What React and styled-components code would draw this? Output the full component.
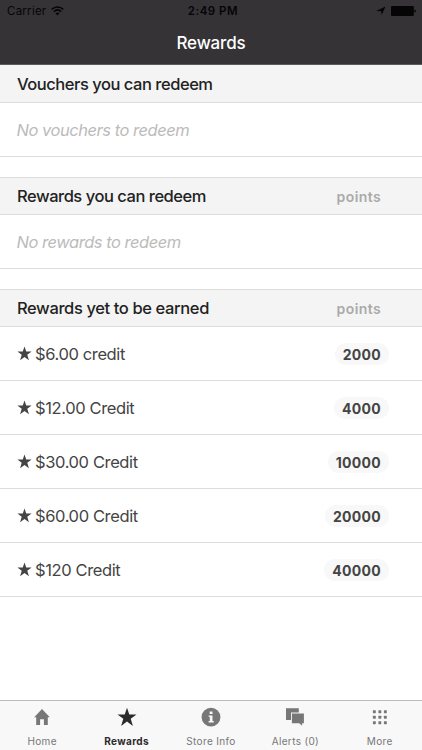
import React from "react"
import styled, { createGlobalStyle } from "styled-components"

const GlobalStyle = createGlobalStyle`
  * {
    box-sizing: border-box;
  }

  body {
    margin: 0;
    background: #fff;
    color: #444;
    font-family: Inter, "Liberation Sans", sans-serif;
    font-size: 16.5px;
  }
`;

const Screen = styled.div`
  display: flex;
  flex-direction: column;
  height: 750px;
  width: 422px;
  overflow: hidden;
`;

const TopBar = styled.header`
  height: 65px;
  flex: none;
  background: #353336;
  border-bottom: 1px solid #5c5b5e;
`;

const StatusBar = styled.div`
  display: grid;
  grid-template-columns: 1fr auto 1fr;
  align-items: center;
  height: 22px;
  padding: 0 6px 0 7px;
  color: #050505;
  font-size: 11.5px;
  line-height: 22px;
`;

const StatusGroup = styled.div`
  display: flex;
  align-items: center;
  justify-content: ${props => props.$end ? "flex-end" : "flex-start"};
  gap: 5px;
  letter-spacing: 0.25px;
`;

const Clock = styled.span`
  padding-left: 3px;
  font-weight: 600;
  letter-spacing: 0.5px;
`;

const Title = styled.h1`
  margin: 0;
  color: #fff;
  font-size: 17px;
  font-weight: 500;
  line-height: 42px;
  letter-spacing: -0.15px;
  text-align: center;
`;

const Content = styled.main`
  flex: 1;
`;

const Section = styled.section`
  margin-bottom: 20px;
`;

const SectionHeader = styled.div`
  display: flex;
  align-items: center;
  justify-content: space-between;
  height: 38px;
  padding: 0 41px 0 17px;
  background: #f4f4f4;
  border-top: 1px solid ${props => props.$first ? "#f4f4f8" : "#dedede"};
  border-bottom: 1px solid #dcdcdc;
`;

const SectionTitle = styled.h2`
  margin: 0;
  color: #222;
  font-size: 16.5px;
  font-weight: 450;
  letter-spacing: ${props => props.$spacing || "-0.47px"};
`;

const PointsLabel = styled.span`
  color: #aaa;
  font-size: 14px;
  font-weight: 600;
  letter-spacing: 0.4px;
`;

const Row = styled.div`
  display: flex;
  align-items: center;
  height: 54px;
  padding: 0 33px 0 16.5px;
  border-bottom: 1px solid #dcdcdc;
`;

const EmptyText = styled.span`
  color: #bbb;
  font-style: italic;
  letter-spacing: -0.47px;
`;

const RewardName = styled.span`
  flex: 1;
  margin-left: 3.5px;
  letter-spacing: -0.38px;
`;

const Pill = styled.span`
  height: 22px;
  padding: 0 8px 0 8px;
  border-radius: 11px;
  background: #f8f8f8;
  font-size: 14px;
  font-weight: 650;
  line-height: 23px;
  letter-spacing: 0.3px;
`;

const TabBar = styled.nav`
  display: grid;
  grid-template-columns: repeat(5, 1fr);
  flex: none;
  height: 50px;
  background: #f8f8f8;
  border-top: 1px solid #bcbcbc;
`;

const Tab = styled.div`
  display: flex;
  flex-direction: column;
  align-items: center;
  padding-top: 6px;
  color: ${props => props.$active ? "#2b2b2b" : "#777"};
  font-size: 10px;
  font-weight: ${props => props.$active ? 700 : 400};
  line-height: 14px;
  letter-spacing: 0.35px;

  svg {
    margin-bottom: 7px;
  }
`;

function WifiIcon() {
  return (
    <svg width="13" height="10" viewBox="0 0 13 10" fill="none" stroke="currentColor" strokeWidth="1.5">
      <path d="M0.7 3.4C4 .2 9 .2 12.3 3.4M2.8 5.7C5 3.5 8 3.5 10.2 5.7" />
      <path d="M4.4 7.3Q6.5 5.5 8.6 7.3L6.5 9.5Z" fill="currentColor" stroke="none" />
    </svg>
  )
}

function LocationIcon() {
  return (
    <svg width="10" height="10" viewBox="0 0 9 9" fill="currentColor">
      <path d="M8.5 0.5L5.2 8.2L4.6 4.7L0.2 4.5Z" />
    </svg>
  )
}

function BatteryIcon() {
  return (
    <svg width="25" height="10" viewBox="0 0 25 10" fill="currentColor">
      <rect width="22.8" height="10" rx="1" />
      <path d="M23.4 3.4Q25 3.8 25 5T23.4 6.6Z" />
    </svg>
  )
}

function StarIcon({ size }) {
  return (
    <svg width={size} height={size} viewBox="0 0 20 20" fill="currentColor">
      <path d="M10 .7L12.3 7.4H19.5L13.7 11.7L15.9 18.9L10 14.5L4.1 18.9L6.3 11.7L.5 7.4H7.7Z" />
    </svg>
  )
}

function HomeIcon() {
  return (
    <svg width="20" height="20" viewBox="0 0 20 20" fill="currentColor">
      <path d="M10 2L17.8 10.2H15.8V18H11.9V12.2H8.1V18H4.2V10.2H2.2Z" />
    </svg>
  )
}

function InfoIcon() {
  return (
    <svg width="20" height="20" viewBox="0 0 20 20">
      <circle cx="10" cy="10.2" r="9.4" fill="currentColor" />
      <path d="M8.7 4.5H11.5V7H8.7ZM7.6 8.4H11.5V14H12.7V15.4H7.6V14H8.8V9.8H7.6Z" fill="#f8f8f8" />
    </svg>
  )
}

function ChatIcon() {
  return (
    <svg width="20" height="20" viewBox="0 0 20 20" fill="currentColor">
      <path d="M1 1.3H13.8V5.4H6V13H1Z" />
      <path d="M6.9 6.4H18.9V16.3H17.1V18.8L14.2 16.3H6.9Z" />
    </svg>
  )
}

function GridIcon() {
  return (
    <svg width="20" height="20" viewBox="0 0 20 20" fill="currentColor">
      {[3.5, 9, 14.5].map(y => [3.5, 9, 14.5].map(x => (
        <rect key={`${x}-${y}`} x={x - 0.6} y={y - 0.2} width="2.9" height="2.9" rx="0.4" />
      )))}
    </svg>
  )
}

const rewards = [
  { name: "$6.00 credit", points: 2000 },
  { name: "$12.00 Credit", points: 4000 },
  { name: "$30.00 Credit", points: 10000 },
  { name: "$60.00 Credit", points: 20000 },
  { name: "$120 Credit", points: 40000 },
];

function Header() {
  return (
    <TopBar>
      <StatusBar>
        <StatusGroup>Carrier <WifiIcon /></StatusGroup>
        <Clock>2:49 PM</Clock>
        <StatusGroup $end>
          <LocationIcon />
          <BatteryIcon />
        </StatusGroup>
      </StatusBar>
      <Title>Rewards</Title>
    </TopBar>
  )
}

function RewardRow({ name, points }) {
  return (
    <Row>
      <StarIcon size={15} />
      <RewardName>{name}</RewardName>
      <Pill>{points}</Pill>
    </Row>
  )
}

function App() {
  return (
    <Screen>
      <GlobalStyle />
      <Header />
      <Content>
        <Section>
          <SectionHeader $first>
            <SectionTitle>Vouchers you can redeem</SectionTitle>
          </SectionHeader>
          <Row><EmptyText>No vouchers to redeem</EmptyText></Row>
        </Section>
        <Section>
          <SectionHeader>
            <SectionTitle>Rewards you can redeem</SectionTitle>
            <PointsLabel>points</PointsLabel>
          </SectionHeader>
          <Row><EmptyText>No rewards to redeem</EmptyText></Row>
        </Section>
        <Section>
          <SectionHeader>
            <SectionTitle $spacing="-0.38px">Rewards yet to be earned</SectionTitle>
            <PointsLabel>points</PointsLabel>
          </SectionHeader>
          {rewards.map(reward => <RewardRow key={reward.name} {...reward} />)}
        </Section>
      </Content>
      <TabBar>
        <Tab><HomeIcon />Home</Tab>
        <Tab $active><StarIcon size={20} />Rewards</Tab>
        <Tab><InfoIcon />Store Info</Tab>
        <Tab><ChatIcon />Alerts (0)</Tab>
        <Tab><GridIcon />More</Tab>
      </TabBar>
    </Screen>
  )
}

export default App
